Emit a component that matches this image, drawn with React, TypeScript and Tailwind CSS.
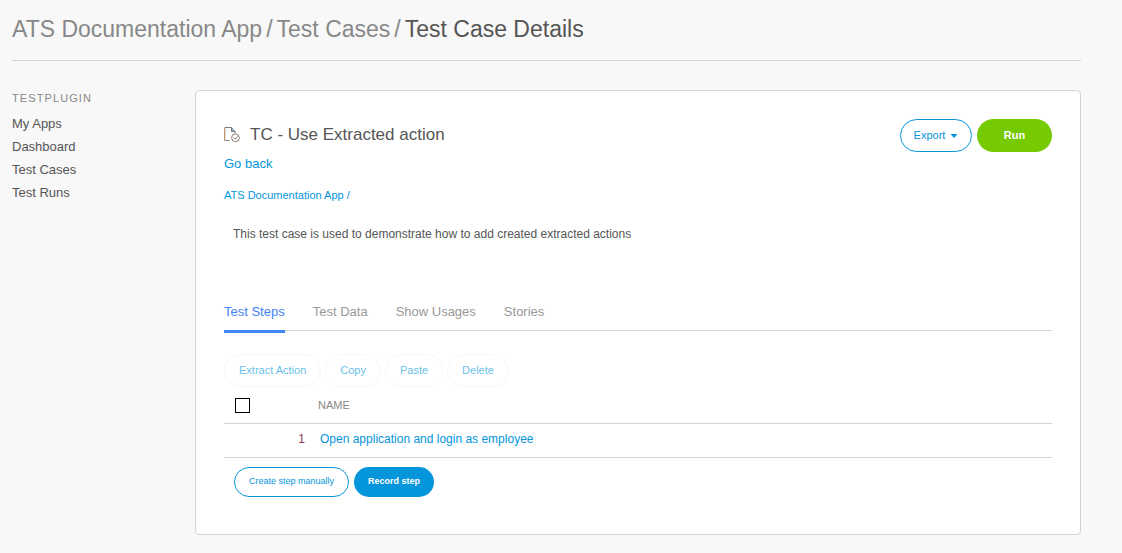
import React from 'react';

const navItems = ['My Apps', 'Dashboard', 'Test Cases', 'Test Runs'];
const tabs = ['Test Steps', 'Test Data', 'Show Usages', 'Stories'];
const actions = ['Extract Action', 'Copy', 'Paste', 'Delete'];
const steps = [{ id: 1, name: 'Open application and login as employee' }];

function TestCaseIcon() {
  return (
    <svg className="shrink-0" width="17" height="17" viewBox="0 0 17 17" fill="none" aria-hidden="true">
      <path d="M5.5 13.5H1.5M1 0.5H7.5L11 4.5V6.5" stroke="#777777" />
      <path d="M7.5 0.5V4.5H11" stroke="#777777" fill="#8fb4cc" />
      <path d="M0.5 14V0.5" stroke="#d0955f" />
      <path d="M1.5 13V1.5" stroke="#c9e4f5" />
      <circle cx="11.5" cy="10.8" r="3.9" stroke="#8f7a6d" />
      <path d="M9.5 10.6L11.1 12.2L13.7 9.2" stroke="#8f7a6d" />
    </svg>
  );
}

function Breadcrumbs() {
  return (
    <header className="border-b border-[#d3d3d3] pt-[11px] pb-[13px]">
      <nav aria-label="Breadcrumb" className="flex gap-1 text-[23px] leading-9 text-[#888888]">
        <a href="#app">ATS Documentation App</a>
        <span>/</span>
        <a href="#cases">Test Cases</a>
        <span>/</span>
        <h1 className="text-[#555555]">Test Case Details</h1>
      </nav>
    </header>
  );
}

function Sidebar() {
  return (
    <aside className="w-[183px] shrink-0">
      <h2 className="text-[11px] leading-4 tracking-widest text-[#888888]">TESTPLUGIN</h2>
      <ul className="mt-1.5 text-[13px] leading-[23px] text-[#555555]">
        {navItems.map((item) => (
          <li key={item}>
            <a href="#nav">{item}</a>
          </li>
        ))}
      </ul>
    </aside>
  );
}

function StepsTable() {
  return (
    <table className="w-full table-fixed border-collapse text-left">
      <thead>
        <tr className="h-9 border-b border-[#d3d3d3]">
          <th scope="col" className="w-[60px] pt-px pl-[11px]">
            <input
              type="checkbox"
              aria-label="Select all steps"
              className="block size-[15px] appearance-none border border-black bg-white"
            />
          </th>
          <th scope="col" className="w-[34px]" aria-label="Number" />
          <th scope="col" className="text-[11px] leading-4 font-normal text-[#888888]">NAME</th>
        </tr>
      </thead>
      <tbody>
        {steps.map((step) => (
          <tr key={step.id} className="h-[34px] border-b border-[#d3d3d3]">
            <td />
            <td className="pr-[13px] pb-0.5 text-right text-[12px] leading-4 text-[#814064]">{step.id}</td>
            <td className="pb-0.5 pl-0.5 text-[12px] leading-4 text-[#0595db]">
              <a href="#step">{step.name}</a>
            </td>
          </tr>
        ))}
      </tbody>
    </table>
  );
}

export default function App() {
  return (
    <div className="min-h-screen bg-[#f8f8f8] pr-[41px] pb-[18px] pl-3 font-['Liberation_Sans',Arial,sans-serif]">
      <Breadcrumbs />
      <div className="flex pt-[29px]">
        <Sidebar />
        <main className="min-w-0 flex-1 rounded border border-[#d3d3d3] bg-white px-7 pt-7 pb-[37px]">
          <div className="flex items-start justify-between">
            <div>
              <div className="flex h-8 items-center gap-[9px]">
                <TestCaseIcon />
                <h2 className="text-[17px] leading-6 text-[#555555]">TC - Use Extracted action</h2>
              </div>
              <a href="#back" className="mt-[3px] block text-[13px] leading-5 text-[#0595db]">Go back</a>
              <a href="#app" className="mt-[13px] block text-[11px] leading-4 text-[#0595db]">ATS Documentation App /</a>
            </div>
            <div className="flex gap-[5px] text-[11px] font-bold">
              <button type="button" className="flex h-[33px] w-[72px] items-center justify-center gap-[5px] rounded-full border border-[#0595db] font-normal text-[#0595db]">
                Export
                <svg width="8" height="4" viewBox="0 0 8 4" fill="currentColor" aria-hidden="true">
                  <path d="M0.5 0H7.5L4 4Z" />
                </svg>
              </button>
              <button type="button" className="h-[33px] w-[75px] rounded-full bg-[#76ca02] text-white">Run</button>
            </div>
          </div>

          <p className="mt-[21px] pl-[9px] text-[12px] leading-5 text-[#555555]">
            This test case is used to demonstrate how to add created extracted actions
          </p>

          <div role="tablist" className="mt-[57px] flex h-[30px] gap-7 border-b border-[#d3d3d3] text-[13px] leading-5">
            {tabs.map((tab, i) => (
              <button
                key={tab}
                type="button"
                role="tab"
                aria-selected={i === 0}
                className={
                  i === 0
                    ? 'h-8 border-b-3 border-[#4285f4] pb-2 text-[#4285f4]'
                    : 'h-8 border-b-3 border-transparent pb-2 text-[#999999]'
                }
              >
                {tab}
              </button>
            ))}
          </div>

          <div className="mt-[23px] flex gap-1">
            {actions.map((action) => (
              <button
                key={action}
                type="button"
                disabled
                className="h-[33px] rounded-full border border-[#f7f7f7] px-3.5 text-[11px] text-[#69bfe9]"
              >
                {action}
              </button>
            ))}
          </div>

          <StepsTable />

          <div className="mt-[9px] flex gap-[5px] pl-2.5 text-[9px]">
            <button type="button" className="h-[30px] rounded-full border border-[#0595db] px-3.5 text-[#0595db]">
              Create step manually
            </button>
            <button type="button" className="h-[30px] rounded-full bg-[#0595db] px-3.5 font-bold text-white">
              Record step
            </button>
          </div>
        </main>
      </div>
    </div>
  );
}
